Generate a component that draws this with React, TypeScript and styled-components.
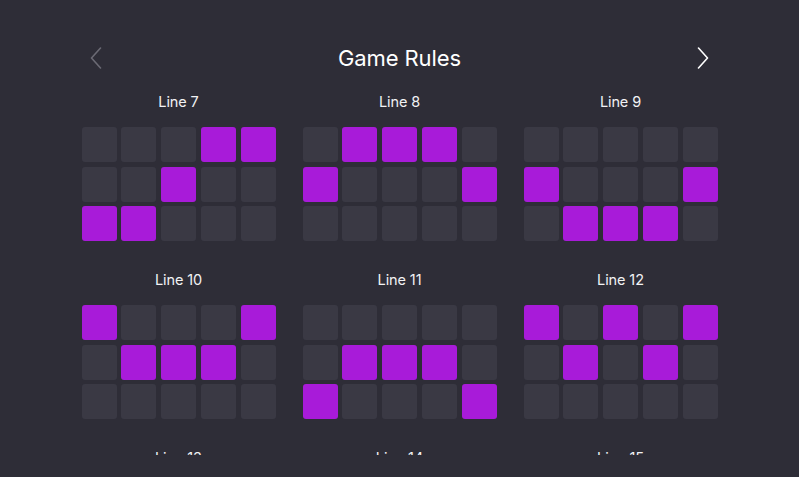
import React from "react";
import styled, { createGlobalStyle } from "styled-components";

const lines: { name: string; rows: number[][] }[] = [
  { name: "Line 7", rows: [[0, 0, 0, 1, 1], [0, 0, 1, 0, 0], [1, 1, 0, 0, 0]] },
  { name: "Line 8", rows: [[0, 1, 1, 1, 0], [1, 0, 0, 0, 1], [0, 0, 0, 0, 0]] },
  { name: "Line 9", rows: [[0, 0, 0, 0, 0], [1, 0, 0, 0, 1], [0, 1, 1, 1, 0]] },
  { name: "Line 10", rows: [[1, 0, 0, 0, 1], [0, 1, 1, 1, 0], [0, 0, 0, 0, 0]] },
  { name: "Line 11", rows: [[0, 0, 0, 0, 0], [0, 1, 1, 1, 0], [1, 0, 0, 0, 1]] },
  { name: "Line 12", rows: [[1, 0, 1, 0, 1], [0, 1, 0, 1, 0], [0, 0, 0, 0, 0]] },
  { name: "Line 13", rows: [[0, 0, 0, 0, 0], [1, 0, 1, 0, 1], [0, 1, 0, 1, 0]] },
  { name: "Line 14", rows: [[0, 1, 0, 1, 0], [1, 0, 1, 0, 1], [0, 0, 0, 0, 0]] },
  { name: "Line 15", rows: [[0, 0, 0, 0, 0], [0, 1, 0, 1, 0], [1, 0, 1, 0, 1]] },
];

export default function App() {
  return (
    <>
      <GlobalStyle />
      <Root>
        <Header>
          <NavButton $disabled aria-label="previous">
            <svg width="12" height="22" viewBox="0 0 12 22" fill="none">
              <path d="M10.5 1 L1.5 11 L10.5 21" stroke="currentColor" strokeWidth="1.6" strokeLinecap="round" strokeLinejoin="round" />
            </svg>
          </NavButton>
          <Title>Game Rules</Title>
          <NavButton aria-label="next">
            <svg width="12" height="22" viewBox="0 0 12 22" fill="none">
              <path d="M1.5 1 L10.5 11 L1.5 21" stroke="currentColor" strokeWidth="1.6" strokeLinecap="round" strokeLinejoin="round" />
            </svg>
          </NavButton>
        </Header>
        <Scroll>
          <LinesGrid>
            {lines.map((line) => (
              <LineItem key={line.name}>
                <LineLabel>{line.name}</LineLabel>
                <Board>
                  {line.rows.flat().map((on, i) => (
                    <Cell key={i} $active={on === 1} />
                  ))}
                </Board>
              </LineItem>
            ))}
          </LinesGrid>
        </Scroll>
      </Root>
    </>
  );
}

const GlobalStyle = createGlobalStyle`
  html, body {
    margin: 0;
    padding: 0;
    background: #2e2d37;
  }
  body {
    font-family: Inter, "Noto Sans", sans-serif;
    color: #ffffff;
  }
`;

const Root = styled.div`
  height: 477px;
  padding-top: 38px;
  box-sizing: border-box;
  background: #2e2d37;
  overflow: hidden;
`;

const Header = styled.div`
  display: flex;
  align-items: center;
  justify-content: space-between;
  height: 40px;
  padding: 0 86px;
`;

const NavButton = styled.button<{ $disabled?: boolean }>`
  width: 20px;
  height: 30px;
  padding: 0;
  border: none;
  background: none;
  display: flex;
  align-items: center;
  justify-content: center;
  cursor: pointer;
  color: ${({ $disabled }) => ($disabled ? "#6b6a74" : "#ffffff")};
`;

const Title = styled.h1`
  margin: 0;
  font-size: 22px;
  font-weight: 400;
  letter-spacing: -0.1px;
  color: #ffffff;
`;

const Scroll = styled.div`
  margin-top: 14px;
  height: 363px;
  overflow: hidden;
`;

const LinesGrid = styled.div`
  display: grid;
  grid-template-columns: repeat(3, 194px);
  column-gap: 27px;
  row-gap: 29px;
  justify-content: center;
`;

const LineItem = styled.div`
  display: flex;
  flex-direction: column;
  align-items: center;
  gap: 15px;
`;

const LineLabel = styled.div`
  font-size: 14.5px;
  line-height: 20px;
  font-weight: 400;
  color: #f2f2f4;
  letter-spacing: -0.1px;
`;

const Board = styled.div`
  display: grid;
  grid-template-columns: repeat(5, 35px);
  grid-auto-rows: 35px;
  column-gap: 4.75px;
  row-gap: 4.5px;
`;

const Cell = styled.div<{ $active: boolean }>`
  border-radius: 3px;
  background: ${({ $active }) => ($active ? "#a81bd9" : "#3a3944")};
`;
